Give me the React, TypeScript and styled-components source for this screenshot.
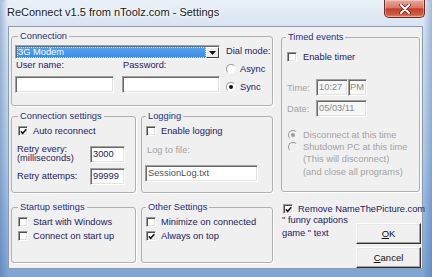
import React from "react";
import styled, { createGlobalStyle } from "styled-components";

const INK = "#1c2062";
const CAPTION = "#1d3080";
const DISABLED = "#a3a3a3";

const GlobalStyle = createGlobalStyle`
  html, body { margin: 0; padding: 0; }
  body {
    background: #a9c3e2;
    font-family: "Liberation Sans", Arial, sans-serif;
    font-size: 9.3px;
    color: ${INK};
  }
`;

const Window = styled.div`
  width: 432px;
  height: 277px;
  box-sizing: border-box;
  padding: 0 9px 8px 8px;
  display: flex;
  flex-direction: column;
  background:
    linear-gradient(90deg, rgba(50, 95, 160, 0.35) 0px, rgba(255, 255, 255, 0) 8px, rgba(255, 255, 255, 0) 423px, rgba(50, 95, 160, 0.35) 432px),
    linear-gradient(180deg, #e9f0f8 0%, #d8e4f1 10%, #b4cbe6 55%, #7ea3d0 100%);
  border-radius: 6px 6px 0 0;
  overflow: hidden;
`;

const TitleBar = styled.div`
  height: 26px;
  flex: none;
  display: flex;
  justify-content: space-between;
  align-items: flex-start;
  margin: 0 -2px 0 -1px;
`;

const Title = styled.div`
  font-size: 11px;
  color: #1a1a1a;
  line-height: 14px;
  margin-top: 5px;
  text-shadow: 0 0 6px #fff, 0 0 3px #fff;
`;

const CloseButton = styled.div`
  width: 41px;
  height: 18px;
  box-sizing: border-box;
  border: 1px solid #6e2a20;
  border-top: none;
  border-radius: 0 0 5px 5px;
  background: linear-gradient(180deg, #e9a99c 0%, #d8786a 45%, #c23f2d 52%, #cf5a40 85%, #e0866a 100%);
  box-shadow: inset 0 0 0 1px rgba(255, 255, 255, 0.35);
  display: flex;
  align-items: center;
  justify-content: center;
`;

const Client = styled.div`
  flex: 1;
  display: flex;
  gap: 8px;
  padding: 3px 2px 0 2px;
  background: #f0f0f0;
  border: 1px solid #8a9cb3;
`;

const LeftArea = styled.div`
  width: 262px;
  display: flex;
  flex-direction: column;
`;

const GroupRow = styled.div<{ $top: number }>`
  display: grid;
  grid-template-columns: 125px 132px;
  column-gap: 5px;
  margin-top: ${(p) => p.$top}px;
`;

const RightCol = styled.div`
  width: 139px;
  display: flex;
  flex-direction: column;
  padding-top: 1px;
`;

const Group = styled.fieldset<{ $h: number; $pad?: string }>`
  margin: 0;
  min-width: 0;
  box-sizing: border-box;
  height: ${(p) => p.$h}px;
  border: 1px solid #b0b0b0;
  border-radius: 3px;
  box-shadow: 1px 1px 0 #fff;
  padding: ${(p) => p.$pad ?? "3px 4px 0 4px"};
  display: flex;
  flex-direction: column;
`;

const Caption = styled.legend<{ $indent: number }>`
  padding: 0 2px;
  margin-left: ${(p) => p.$indent}px;
  line-height: 12px;
  color: ${CAPTION};
`;

const Text = styled.span<{ $disabled?: boolean; $lh?: number }>`
  color: ${(p) => (p.$disabled ? DISABLED : INK)};
  line-height: ${(p) => p.$lh ?? 12}px;
  white-space: nowrap;
`;

/* ---------- classic controls ---------- */

const BoxMark = styled.span`
  flex: none;
  width: 10px;
  height: 10px;
  box-sizing: border-box;
  border: 1px solid;
  border-color: #9a9a9a #fff #fff #9a9a9a;
  box-shadow: inset 1px 1px 0 #505050, inset -1px -1px 0 #e2e2e2;
  background: #fff;
  display: flex;
  align-items: center;
  justify-content: center;
`;

const OptionRow = styled.div<{ $gap?: number; $indent?: number; $top?: number }>`
  display: flex;
  align-items: center;
  gap: ${(p) => p.$gap ?? 5}px;
  margin-left: ${(p) => p.$indent ?? 0}px;
  margin-top: ${(p) => p.$top ?? 0}px;
  line-height: 12px;
`;

const RadioMark = styled.span<{ $disabled?: boolean }>`
  flex: none;
  width: 10px;
  height: 10px;
  box-sizing: border-box;
  border-radius: 50%;
  border: 1px solid;
  border-color: #9a9a9a #f8f8f8 #f8f8f8 #9a9a9a;
  background: ${(p) => (p.$disabled ? "#f0f0f0" : "#fff")};
  display: flex;
  align-items: center;
  justify-content: center;
`;

const RadioDot = styled.span<{ $disabled?: boolean }>`
  width: 4px;
  height: 4px;
  border-radius: 50%;
  background: ${(p) => (p.$disabled ? "#9a9a9a" : "#111")};
`;

const TextBox = styled.div<{ $w: number; $disabled?: boolean; $color?: string }>`
  width: ${(p) => p.$w}px;
  height: 17px;
  box-sizing: border-box;
  border: 1px solid;
  border-color: #a0a0a0 #fff #fff #a0a0a0;
  box-shadow: inset 1px 1px 0 #696969, inset -1px -1px 0 #e3e3e3;
  background: ${(p) => (p.$disabled ? "#f7f7f7" : "#fff")};
  color: ${(p) => p.$color ?? INK};
  padding: 0 2px;
  line-height: 15px;
  flex: none;
`;

const Combo = styled.div`
  height: 14px;
  box-sizing: border-box;
  display: flex;
  border: 1px solid;
  border-color: #a0a0a0 #fff #fff #a0a0a0;
  box-shadow: inset 1px 1px 0 #696969;
  background: #fff;
  padding: 1px 0 0 1px;
`;

const ComboValue = styled.div`
  flex: 1;
  background: linear-gradient(180deg, #5aa2ef 0%, #3a8ae6 100%);
  color: #fff;
  line-height: 11px;
  padding-left: 1px;
  outline: 1px dotted #c9def7;
  outline-offset: -1px;
`;

const ComboArrow = styled.div`
  width: 13px;
  box-sizing: border-box;
  border: 1px solid;
  border-color: #fff #404040 #404040 #fff;
  background: #ececec;
  display: flex;
  align-items: center;
  justify-content: center;
`;

const Button = styled.div`
  width: 65px;
  height: 21px;
  box-sizing: border-box;
  border: 1px solid;
  border-color: #fff #303030 #303030 #fff;
  box-shadow: inset -1px -1px 0 #a0a0a0, inset 1px 1px 0 #e8e8e8;
  background: #f0f0f0;
  color: #111;
  font-size: 9.5px;
  display: flex;
  align-items: center;
  justify-content: center;
`;

/* ---------- group internals ---------- */

const ConnBody = styled.div`
  display: flex;
  padding-left: 3px;
`;

const ConnFields = styled.div`
  width: 205px;
  display: flex;
  flex-direction: column;
`;

const FieldGrid = styled.div`
  display: grid;
  grid-template-columns: 99px 98px;
  column-gap: 8px;
`;

const FieldLabel = styled.span`
  padding-left: 1px;
  line-height: 10px;
  margin-top: 1px;
  margin-bottom: 6px;
`;

const DialCol = styled.div`
  margin-left: 6px;
  display: flex;
  flex-direction: column;
  gap: 6px;
`;

const SettingRow = styled.div<{ $top: number }>`
  display: flex;
  align-items: center;
  margin-top: ${(p) => p.$top}px;
`;

const SettingLabel = styled.div`
  width: 73px;
  line-height: 9px;
`;

const TimeRow = styled.div<{ $top: number }>`
  display: flex;
  align-items: center;
  margin-top: ${(p) => p.$top}px;
`;

const TimeLabel = styled(Text)`
  width: 29px;
`;

const Lines = styled.div<{ $indent: number }>`
  display: flex;
  flex-direction: column;
  padding-left: ${(p) => p.$indent}px;
  line-height: 13px;
`;

const BottomArea = styled.div`
  display: flex;
  justify-content: space-between;
  margin-right: -1px;
`;

const Note = styled.div`
  margin-top: -1px;
  line-height: 13px;
  padding-left: 1px;
`;

const Buttons = styled.div`
  display: flex;
  flex-direction: column;
  gap: 3px;
  margin-top: 8px;
`;

const Tick = () => (
  <svg width="7" height="7" viewBox="0 0 7 7">
    <path d="M0.8 3.4 L2.7 5.3 L6.3 1.3" fill="none" stroke="#111" strokeWidth="1.5" />
  </svg>
);

const Check: React.FC<{ checked?: boolean; gap?: number; indent?: number; top?: number; children: React.ReactNode }> = ({
  checked,
  gap,
  indent,
  top,
  children,
}) => (
  <OptionRow $gap={gap} $indent={indent} $top={top}>
    <BoxMark>{checked && <Tick />}</BoxMark>
    <Text>{children}</Text>
  </OptionRow>
);

const Radio: React.FC<{ on?: boolean; disabled?: boolean; gap?: number; children: React.ReactNode }> = ({
  on,
  disabled,
  gap,
  children,
}) => (
  <OptionRow $gap={gap ?? 4}>
    <RadioMark $disabled={disabled}>{on && <RadioDot $disabled={disabled} />}</RadioMark>
    <Text $disabled={disabled}>{children}</Text>
  </OptionRow>
);

export default function App() {
  return (
    <>
      <GlobalStyle />
      <Window>
        <TitleBar>
          <Title>ReConnect v1.5 from nToolz.com - Settings</Title>
          <CloseButton>
            <svg width="12" height="10" viewBox="0 0 12 10">
              <path d="M2 1 L10 9 M10 1 L2 9" stroke="#5a2019" strokeWidth="3.4" strokeLinecap="round" />
              <path d="M2 1 L10 9 M10 1 L2 9" stroke="#fff" strokeWidth="2" strokeLinecap="round" />
            </svg>
          </CloseButton>
        </TitleBar>

        <Client>
          <LeftArea>
            <Group $h={76} $pad="3px 4px 0 0">
              <Caption $indent={6}>Connection</Caption>
              <ConnBody>
                <ConnFields>
                  <Combo>
                    <ComboValue>3G Modem</ComboValue>
                    <ComboArrow>
                      <svg width="7" height="4" viewBox="0 0 7 4">
                        <path d="M0 0 H7 L3.5 4 Z" fill="#111" />
                      </svg>
                    </ComboArrow>
                  </Combo>
                  <FieldGrid>
                    <FieldLabel>User name:</FieldLabel>
                    <FieldLabel>Password:</FieldLabel>
                    <TextBox $w={99} />
                    <TextBox $w={98} />
                  </FieldGrid>
                </ConnFields>
                <DialCol>
                  <Text>Dial mode:</Text>
                  <Radio>Async</Radio>
                  <Radio on>Sync</Radio>
                </DialCol>
              </ConnBody>
            </Group>

            <GroupRow $top={4}>
              <Group $h={83} $pad="3px 4px 0 5px">
                <Caption $indent={1}>Connection settings</Caption>
                <Check checked indent={1}>
                  Auto reconnect
                </Check>
                <SettingRow $top={8}>
                  <SettingLabel>
                    Retry every:
                    <br />
                    (milliseconds)
                  </SettingLabel>
                  <TextBox $w={35}>3000</TextBox>
                </SettingRow>
                <SettingRow $top={5}>
                  <SettingLabel>Retry attemps:</SettingLabel>
                  <TextBox $w={35}>99999</TextBox>
                </SettingRow>
              </Group>

              <Group $h={83}>
                <Caption $indent={0}>Logging</Caption>
                <Check>Enable logging</Check>
                <OptionRow $indent={1} $top={7}>
                  <Text $disabled>Log to file:</Text>
                </OptionRow>
                <SettingRow $top={9}>
                  <TextBox $w={113} $color="#505050" style={{ marginLeft: -1 }}>
                    SessionLog.txt
                  </TextBox>
                </SettingRow>
              </Group>
            </GroupRow>

            <GroupRow $top={8}>
              <Group $h={62} $pad="3px 4px 0 5px">
                <Caption $indent={1}>Startup settings</Caption>
                <Check indent={1}>Start with Windows</Check>
                <Check indent={1} top={2}>
                  Connect on start up
                </Check>
              </Group>
              <Group $h={62}>
                <Caption $indent={0}>Other Settings</Caption>
                <Check>Minimize on connected</Check>
                <Check checked top={2}>
                  Always on top
                </Check>
              </Group>
            </GroupRow>
          </LeftArea>

          <RightCol>
            <Group $h={161} $pad="8px 4px 0 5px">
              <Caption $indent={-1}>Timed events</Caption>
              <Check gap={6}>Enable timer</Check>
              <TimeRow $top={16}>
                <TimeLabel $disabled>Time:</TimeLabel>
                <TextBox $w={32} $disabled $color="#8a8a8a">
                  10:27
                </TextBox>
                <TextBox $w={19} $disabled $color="#8a8a8a" style={{ paddingLeft: 1 }}>
                  PM
                </TextBox>
              </TimeRow>
              <TimeRow $top={4}>
                <TimeLabel $disabled>Date:</TimeLabel>
                <TextBox $w={51} $disabled $color="#8a8a8a">
                  05/03/11
                </TextBox>
              </TimeRow>
              <Lines $indent={1} style={{ marginTop: 12 }}>
                <Radio on disabled gap={5}>
                  Disconnect at this time
                </Radio>
                <Radio disabled gap={5}>
                  Shutdown PC at this time
                </Radio>
                <Lines $indent={15}>
                  <Text $disabled $lh={13}>(This will disconnect)</Text>
                  <Text $disabled $lh={13}>(and close all programs)</Text>
                </Lines>
              </Lines>
            </Group>

            <Check checked indent={2} top={11}>
              Remove NameThePicture.com
            </Check>
            <BottomArea>
              <Note>
                " funny captions
                <br />
                game " text
              </Note>
              <Buttons>
                <Button>
                  <u>O</u>K
                </Button>
                <Button>
                  <u>C</u>ancel
                </Button>
              </Buttons>
            </BottomArea>
          </RightCol>
        </Client>
      </Window>
    </>
  );
}
